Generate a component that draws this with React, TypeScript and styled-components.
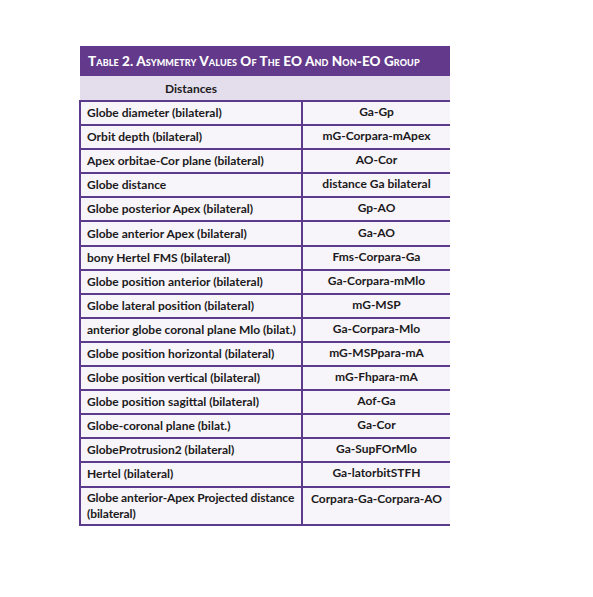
import React from "react";
import styled, { createGlobalStyle } from "styled-components";

const Global = createGlobalStyle`
  html, body { margin: 0; padding: 0; background: #ffffff; }
  body { font-family: Lato, "Open Sans", sans-serif; }
`;

const Page = styled.div`
  padding: 46px 0 0 79px;
`;

const Table = styled.table`
  width: 371px;
  border-collapse: collapse;
  border-spacing: 0;
  font-family: Lato, "Open Sans", sans-serif;
  font-weight: 700;
  font-size: 12px;
  color: #1c1a20;
`;

const TitleCell = styled.th`
  background: #633a8b;
  color: #ffffff;
  text-align: left;
  font-variant: small-caps;
  font-size: 13.5px;
  font-weight: 900;
  letter-spacing: 0.1px;
  height: 30px;
  padding: 0 0 0 8px;
  box-sizing: border-box;
`;

const SubCell = styled.th`
  background: #e4deec;
  text-align: center;
  font-size: 12px;
  font-weight: 700;
  height: 24px;
  padding: 0;
  border-bottom: 2px solid #5c3a8c;
`;

const SubBlank = styled.th`
  background: #e4deec;
  height: 24px;
  padding: 0;
  border-bottom: 2px solid #5c3a8c;
`;

const Row = styled.tr<{ $tall?: boolean }>`
  background: #f7f5fa;
  height: ${(p) => (p.$tall ? "38px" : "24.1px")};
`;

const NameCell = styled.td<{ $tall?: boolean }>`
  width: 222px;
  box-sizing: border-box;
  padding: ${(p) => (p.$tall ? "2px 0 2px 6px" : "2px 2px 3px 6px")};
  border-left: 2px solid #5c3a8c;
  border-right: 2px solid #5c3a8c;
  border-bottom: 2px solid #5c3a8c;
  vertical-align: middle;
  line-height: ${(p) => (p.$tall ? "16px" : "15px")};
  letter-spacing: ${(p) => (p.$tall ? "-0.1px" : "0")};
`;

const CodeCell = styled.td<{ $top?: boolean }>`
  box-sizing: border-box;
  padding: ${(p) => (p.$top ? "3px 4px 0" : "1px 4px 4px")};
  text-align: center;
  border-bottom: 2px solid #5c3a8c;
  vertical-align: ${(p) => (p.$top ? "top" : "middle")};
  line-height: 15px;
`;

const rows: [string, string][] = [
  ["Globe diameter (bilateral)", "Ga-Gp"],
  ["Orbit depth (bilateral)", "mG-Corpara-mApex"],
  ["Apex orbitae-Cor plane (bilateral)", "AO-Cor"],
  ["Globe distance", "distance Ga bilateral"],
  ["Globe posterior Apex (bilateral)", "Gp-AO"],
  ["Globe anterior Apex (bilateral)", "Ga-AO"],
  ["bony Hertel FMS (bilateral)", "Fms-Corpara-Ga"],
  ["Globe position anterior (bilateral)", "Ga-Corpara-mMlo"],
  ["Globe lateral position (bilateral)", "mG-MSP"],
  ["anterior globe coronal plane Mlo (bilat.)", "Ga-Corpara-Mlo"],
  ["Globe position horizontal (bilateral)", "mG-MSPpara-mA"],
  ["Globe position vertical (bilateral)", "mG-Fhpara-mA"],
  ["Globe position sagittal (bilateral)", "Aof-Ga"],
  ["Globe-coronal plane (bilat.)", "Ga-Cor"],
  ["GlobeProtrusion2 (bilateral)", "Ga-SupFOrMlo"],
  ["Hertel (bilateral)", "Ga-latorbitSTFH"],
  ["Globe anterior-Apex Projected distance (bilateral)", "Corpara-Ga-Corpara-AO"],
];

export default function App() {
  return (
    <Page>
      <Global />
      <Table>
        <thead>
          <tr>
            <TitleCell colSpan={2}>Table 2. Asymmetry Values Of The EO And Non-EO Group</TitleCell>
          </tr>
          <tr>
            <SubCell>Distances</SubCell>
            <SubBlank />
          </tr>
        </thead>
        <tbody>
          {rows.map(([a, b], i) => {
            const last = i === rows.length - 1;
            return (
              <Row key={i} $tall={last}>
                <NameCell $tall={last}>{a}</NameCell>
                <CodeCell $top={last}>{b}</CodeCell>
              </Row>
            );
          })}
        </tbody>
      </Table>
    </Page>
  );
}
